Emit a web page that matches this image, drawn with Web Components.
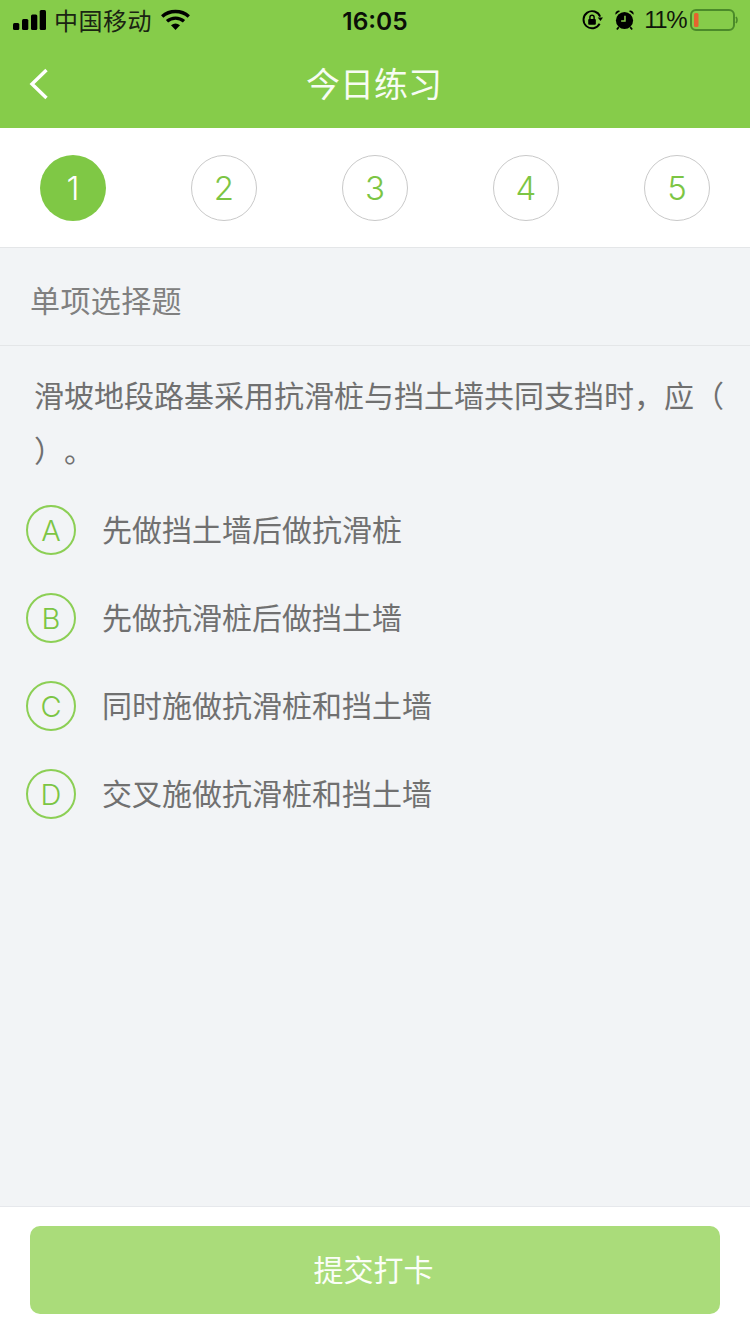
<!DOCTYPE html>
<html lang="zh"><head><meta charset="utf-8">
<style>
html,body{margin:0;padding:0}
body{width:750px;height:1334px;background:#f2f4f6;font-family:"Noto Sans CJK SC","Liberation Sans",sans-serif;display:flex;flex-direction:column;overflow:hidden}
</style></head><body>
<app-header title="今日练习"></app-header>
<step-bar current="1" count="5"></step-bar>
<section-title>单项选择题</section-title>
<question-text>滑坡地段路基采用抗滑桩与挡土墙共同支挡时，应（ ）。</question-text>
<quiz-option letter="A">先做挡土墙后做抗滑桩</quiz-option>
<quiz-option letter="B">先做抗滑桩后做挡土墙</quiz-option>
<quiz-option letter="C">同时施做抗滑桩和挡土墙</quiz-option>
<quiz-option letter="D">交叉施做抗滑桩和挡土墙</quiz-option>
<submit-bar>提交打卡</submit-bar>
<script>
function def(name, html){
  customElements.define(name, class extends HTMLElement{
    connectedCallback(){
      if(this.shadowRoot) return;
      const r=this.attachShadow({mode:'open'});
      r.innerHTML=typeof html==='function'?html(this):html;
    }
  });
}
def('status-bar',`<style>
:host{display:flex;height:40px;align-items:center;justify-content:space-between;padding:0 12px 0 13px;color:#0b0f08;font-family:"Liberation Sans",sans-serif;position:relative}
.l,.r{display:flex;align-items:center}
.c{font:24px "Noto Sans CJK SC",sans-serif;margin-left:8px;line-height:40px;color:#1a2412;letter-spacing:.5px}
.w{margin-left:9px}
.t{position:absolute;left:0;right:0;text-align:center;font:600 24.500px Inter,"Liberation Sans",sans-serif;line-height:40px;top:1px}
.p{font-size:24px;margin:0 4px 0 9px;letter-spacing:-1.500px;color:#10160b}
</style>
<div class="l">
<svg width="33" height="20" viewBox="0 0 33 20" fill="#000"><rect x="0" y="13" width="6.300" height="7" rx="1.500"/><rect x="9" y="9" width="6.300" height="11" rx="1.500"/><rect x="18" y="4.500" width="6.300" height="15.500" rx="1.500"/><rect x="26.700" y="0" width="6.300" height="20" rx="1.500"/></svg>
<span class="c">中国移动</span>
<svg class="w" width="29" height="22" viewBox="0 0 29 22"><path d="M1.200 7.500C8.500 .8 20.500 .8 27.800 7.500" fill="none" stroke="#000" stroke-width="3.400"/><path d="M6 12.300C11 8 18 8 23 12.300" fill="none" stroke="#000" stroke-width="3.400"/><path d="M10 16.200Q14.500 12.800 19 16.200L14.500 21z" fill="#000"/></svg>
</div>
<div class="t">16:05</div>
<div class="r">
<svg width="21" height="22" viewBox="0 0 22 22"><path d="M18.500 15A9 9 0 1 1 19 7.500" fill="none" stroke="#000" stroke-width="2"/><path d="M16.500 8.500h5.500l-2.700 3.500z" fill="#000"/><rect x="6.500" y="10" width="8" height="6" rx="1" fill="#000"/><path d="M8.300 10V8.200a2.200 2.200 0 0 1 4.400 0V10" fill="none" stroke="#000" stroke-width="1.500"/></svg>
<svg style="margin-left:11px" width="21" height="22" viewBox="0 0 22 22"><circle cx="11" cy="11.500" r="9" fill="#000"/><path d="M1.500 5.500a3.500 3.500 0 0 1 5-4zM20.500 5.500a3.500 3.500 0 0 0-5-4z" fill="#000"/><path d="M11.500 6.500v5.500H7.500" fill="none" stroke="#86cd4a" stroke-width="1.600"/><path d="M5 18.500l-2 2.500M17 18.500l2 2.500" stroke="#000" stroke-width="1.800"/></svg>
<span class="p">11%</span>
<svg width="48" height="24" viewBox="0 0 48 24"><rect x="1" y="2" width="43" height="20" rx="5" fill="none" stroke="#4b8a2a" stroke-width="2"/><rect x="4" y="5" width="4.500" height="14" rx="1.500" fill="#e5632f"/><path d="M46 9q2 3 0 6" fill="none" stroke="#4b8a2a" stroke-width="1.600"/></svg>
</div>`);
def('app-header',h=>`<style>
:host{display:block;background:#86cc4a;height:128px;flex:none}
.n{height:88px;display:flex;align-items:center;justify-content:center;position:relative}
h1{margin:0;font:400 34px/1 "Noto Sans CJK SC",sans-serif;color:#f7fcf3;position:relative;top:-1px;left:-1px}
svg{position:absolute;left:28px;top:27px}
</style><status-bar></status-bar><div class="n">
<svg width="22" height="34" viewBox="0 0 22 34"><path d="M18.500 3L4 17l14.500 14" fill="none" stroke="#fff" stroke-width="3.400"/></svg>
<h1>${h.getAttribute('title')}</h1></div>`);
def('step-bar',h=>{
  const n=+h.getAttribute('count'),c=+h.getAttribute('current');let s='';
  for(let i=1;i<=n;i++)s+=`<span class="${i===c?'on':''}">${i}</span>`;
  return `<style>
:host{display:flex;flex:none;justify-content:space-between;background:#fff;padding:27px 40px 26px;border-bottom:1px solid #e4e6e8}
span{width:66px;height:66px;box-sizing:border-box;border:1px solid #c9c9c9;border-radius:50%;display:flex;align-items:center;justify-content:center;font:350 33px Inter,"Liberation Sans",sans-serif;color:#7cc544}
.on{background:#7fc845;border:0;color:#fff}
</style>${s}`});
def('section-title',`<style>
:host{display:block;flex:none;height:98px;box-sizing:border-box;border-bottom:1px solid #e4e6e8;padding:0 30px;font:400 30px/102px "Noto Sans CJK SC",sans-serif;color:#808080;letter-spacing:.4px}
</style><slot></slot>`);
def('question-text',`<style>
:host{display:block;flex:none;padding:21px 20px 0 34px;height:140px;box-sizing:border-box;font:400 30px/55px "Noto Sans CJK SC",sans-serif;color:#707070;word-break:break-all;text-spacing-trim:space-all}
</style><slot></slot>`);
def('quiz-option',h=>`<style>
:host{display:flex;flex:none;align-items:center;height:88px;padding-left:26px;font:400 30px "Noto Sans CJK SC",sans-serif;color:#707070}
i{width:50px;height:50px;box-sizing:border-box;border:2px solid #8ccf55;border-radius:50%;display:flex;align-items:center;justify-content:center;font:350 29px/1 Inter,"Liberation Sans",sans-serif;color:#7cc544;margin-right:26px;padding-top:1px;font-style:normal}
span{position:relative;top:-2px}
</style><i>${h.getAttribute('letter')}</i><span><slot></slot></span>`);
def('submit-bar',`<style>
:host{display:block;flex:none;margin-top:auto;background:#fff;border-top:1px solid #e6e8ec;height:128px;box-sizing:border-box;padding:19px 30px 0}
button{display:block;width:100%;height:88px;border:0;border-radius:10px;background:#aadc7a;color:#fbfef8;font:400 30px "Noto Sans CJK SC",sans-serif;padding:0 3px 4px 0}
</style><button><slot></slot></button>`);
</script>
</body></html>
